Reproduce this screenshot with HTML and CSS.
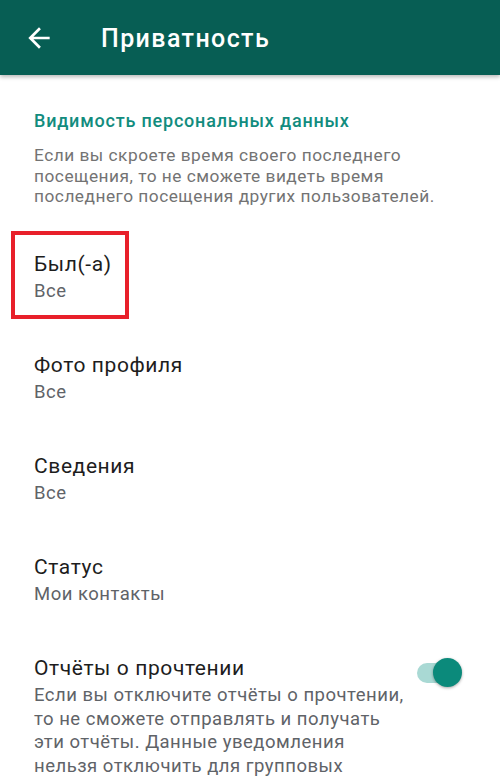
FILE: index.html
```html
<!DOCTYPE html>
<html lang="ru">
<head>
<meta charset="utf-8">
<title>Приватность</title>
<link rel="stylesheet" href="styles.css">
</head>
<body>
<header class="appbar">
  <svg class="back" viewBox="0 0 24 24" width="32" height="32" aria-hidden="true">
    <path d="M20 11H7.83l5.59-5.59L12 4l-8 8 8 8 1.41-1.41L7.83 13H20v-2z" fill="#ffffff"/>
  </svg>
  <h1 class="appbar-title">Приватность</h1>
</header>
<main class="content">
  <h2 class="section-title">Видимость персональных данных</h2>
  <p class="section-desc">Если вы скроете время своего последнего посещения, то не сможете видеть время последнего посещения других пользователей.</p>

  <div class="item item-first">
    <span class="highlight"></span>
    <div class="item-title">Был(-а)</div>
    <div class="item-sub">Все</div>
  </div>
  <div class="item">
    <div class="item-title">Фото профиля</div>
    <div class="item-sub">Все</div>
  </div>
  <div class="item">
    <div class="item-title">Сведения</div>
    <div class="item-sub">Все</div>
  </div>
  <div class="item">
    <div class="item-title">Статус</div>
    <div class="item-sub">Мои контакты</div>
  </div>
  <div class="item item-switch">
    <div class="item-text">
      <div class="item-title">Отчёты о прочтении</div>
      <div class="item-desc">Если вы отключите отчёты о прочтении,<br>то не сможете отправлять и получать<br>эти отчёты. Данные уведомления<br>нельзя отключить для групповых</div>
    </div>
    <div class="switch">
      <span class="switch-track"></span>
      <span class="switch-thumb"></span>
    </div>
  </div>
</main>
</body>
</html>
```

FILE: styles.css
```css
html, body {
  margin: 0;
  padding: 0;
  background: #ffffff;
}
body {
  font-family: Roboto, "Noto Sans", "Liberation Sans", sans-serif;
  width: 500px;
  height: 777px;
  overflow: hidden;
}
.appbar {
  height: 75px;
  background: #075e54;
  display: flex;
  align-items: center;
  padding-left: 23px;
  box-shadow: 0 2px 4px rgba(0, 0, 0, 0.28);
  position: relative;
  z-index: 1;
}
.back {
  display: block;
  flex: none;
}
.appbar-title {
  margin: 0 0 0 46px;
  padding-top: 3px;
  color: #ffffff;
  font-size: 25px;
  font-weight: 500;
  line-height: 28px;
  letter-spacing: 1.4px;
}
.content {
  padding: 0 34px;
}
.section-title {
  margin: 36px 0 0;
  font-size: 18px;
  line-height: 20px;
  font-weight: 500;
  letter-spacing: 0.8px;
  color: #128c7e;
}
.section-desc {
  margin: 14px 0 0;
  font-size: 17.3px;
  line-height: 20.5px;
  letter-spacing: 0.5px;
  color: #737373;
}
.item {
  position: relative;
  margin-top: 47px;
}
.item-first {
  margin-top: 43.5px;
}
.highlight {
  position: absolute;
  left: -23px;
  top: -19px;
  width: 110px;
  height: 80px;
  border: 4px solid #e8202a;
}
.item-title {
  font-size: 21px;
  line-height: 28px;
  letter-spacing: 0.6px;
  color: #1d1d1d;
}
.item-sub {
  font-size: 18.5px;
  line-height: 26px;
  letter-spacing: 0.5px;
  color: #5f6368;
}
.item-switch {
  display: flex;
  align-items: flex-start;
}
.item-text {
  width: 372px;
  flex: none;
}
.item-desc {
  margin-top: 2px;
  font-size: 18.5px;
  line-height: 23.7px;
  letter-spacing: 0.5px;
  color: #5f6368;
  white-space: nowrap;
}
.switch {
  position: relative;
  width: 46px;
  height: 30px;
  margin-left: 11px;
  margin-top: 4px;
  flex: none;
}
.switch-track {
  position: absolute;
  left: 0;
  top: 5px;
  width: 40px;
  height: 20px;
  border-radius: 10px;
  background: #a9d9d4;
}
.switch-thumb {
  position: absolute;
  left: 16px;
  top: 0;
  width: 29px;
  height: 29px;
  border-radius: 50%;
  background: #0b8a7b;
  box-shadow: 0 1px 3px rgba(0, 0, 0, 0.35);
}
```
